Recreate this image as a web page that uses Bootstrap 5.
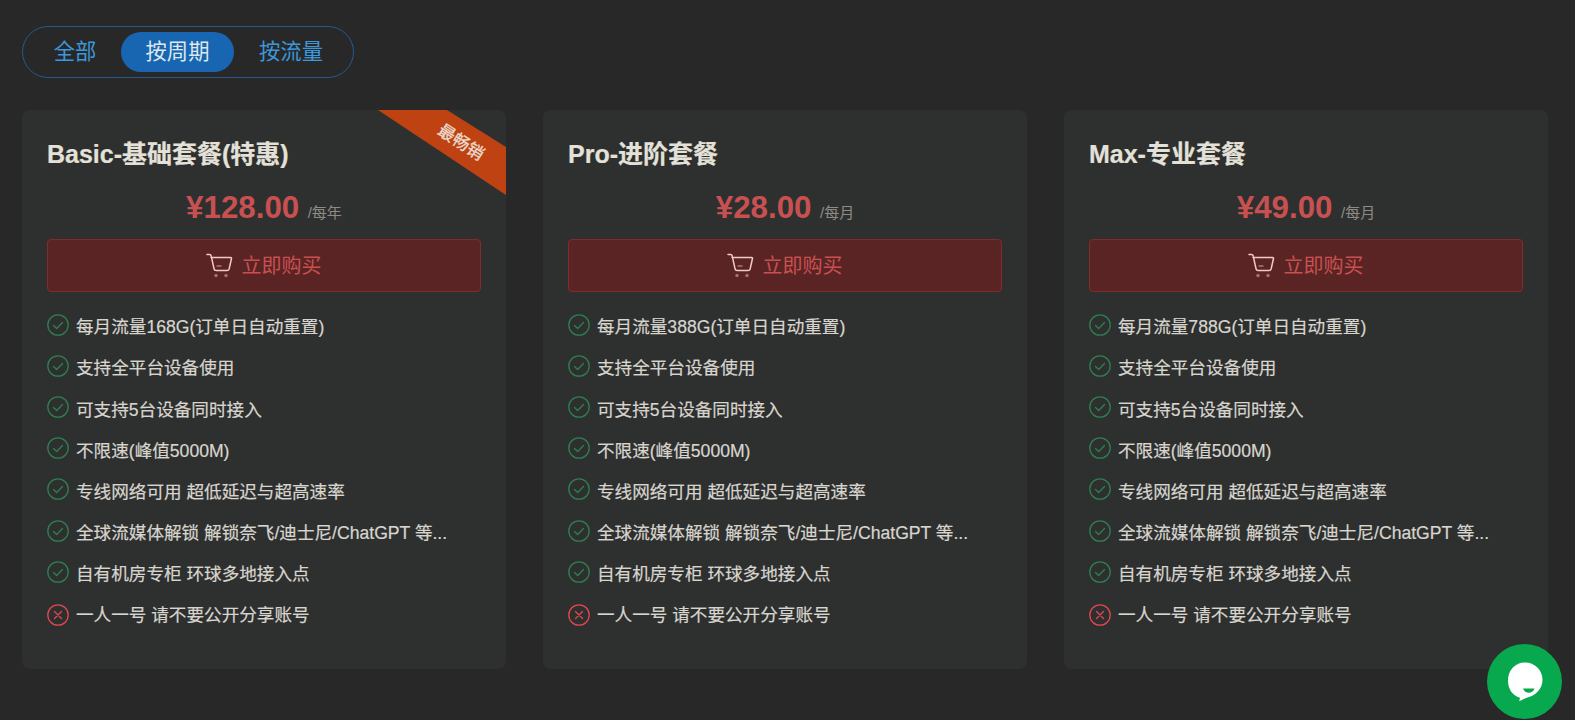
<!DOCTYPE html>
<html lang="zh-CN">
<head>
    <meta charset="UTF-8">
    <meta name="viewport" content="width=device-width, initial-scale=1, shrink-to-fit=no">
    <title>套餐</title>

    <link href="https://cdn.jsdelivr.net/npm/bootstrap@5.3.2/dist/css/bootstrap.min.css" rel="stylesheet">

    <style>
        body {
            font-family: "Liberation Sans", "Noto Sans CJK SC", sans-serif;
            background-color: #282828;
            color: #d8d5ce;
            height: 720px;
            overflow: hidden;
        }
        .page-wrap {
            padding: 26px 27px 0 22px;
        }
        .period-tabs {
            width: 332px;
            height: 52px;
            padding: 5px 0 0 0;
            border: 1px solid #245a8e;
            border-radius: 26px;
            margin-bottom: 32px;
        }
        .period-tab {
            height: 40px;
            line-height: 41px;
            font-size: 21.3px;
            color: #3c98dc;
            text-align: center;
            text-decoration: none;
            border-radius: 20px;
        }
        .period-tab.first { width: 98px; padding-left: 6px; }
        .period-tab.middle { width: 113px; background-color: #1866b2; color: #dfe6ec; }
        .period-tab.last { width: 114px; }
        .plan-row {
            --bs-gutter-x: 37px;
        }
        .plan-box {
            position: relative;
            height: 559px;
            padding: 26px 25px 0;
            background-color: #2e3030;
            border-radius: 8px;
            overflow: hidden;
        }
        .plan-title {
            font-size: 25px;
            line-height: 36px;
            font-weight: 700;
            color: #e4e1d9;
            margin: 0 0 17px;
            -webkit-text-stroke: 0.2px #e4e1d9;
        }
        .plan-price {
            height: 34px;
            line-height: 38px;
            margin-bottom: 16px;
        }
        .price-num {
            font-size: 31.3px;
            font-weight: 700;
            color: #c95050;
        }
        .price-unit {
            font-size: 15px;
            color: #8f8b82;
            margin-left: 4px;
        }
        .buy-btn {
            height: 53px;
            font-size: 20px;
            color: #c95050;
            background-color: #5a2424;
            border: 1px solid #842a2a;
            border-radius: 4px;
        }
        .buy-btn:hover {
            color: #c95050;
            background-color: #5a2424;
            border-color: #842a2a;
        }
        .feature-list {
            margin: 15px 0 0;
            padding: 0;
            list-style: none;
        }
        .feature-list li {
            height: 41.1px;
            font-size: 17.6px;
            white-space: nowrap;
            -webkit-text-stroke: 0.2px #d8d5ce;
        }
        .feature-icon {
            margin-right: 7px;
        }
        .check-mark {
            margin-top: -5px;
        }
        .ribbon-wrap {
            position: absolute;
            top: 0;
            right: 0;
            width: 128px;
            height: 85px;
            background-color: #bf4312;
            clip-path: polygon(0 0, 69px 0, 128px 37px, 128px 85px);
        }
        .ribbon-text {
            position: absolute;
            left: 57px;
            top: 23px;
            font-size: 17px;
            line-height: 20px;
            color: #ecdcd0;
            -webkit-text-stroke: 0.3px #ecdcd0;
            transform: rotate(33deg);
            white-space: nowrap;
        }
        .chat-btn {
            position: fixed;
            left: 1487px;
            top: 644px;
            width: 75px;
            height: 75px;
            background-color: #08a84f;
        }
    </style>
</head>
<body>

<div class="page-wrap">
    <div class="period-tabs d-flex justify-content-start">
        <a class="period-tab first" href="#">全部</a>
        <a class="period-tab middle" href="#">按周期</a>
        <a class="period-tab last" href="#">按流量</a>
    </div>

    <div class="row plan-row" id="plans"></div>
</div>

<div class="chat-btn rounded-circle">
    <svg width="75" height="75" viewBox="0 0 75 75">
        <path d="M38 18.500c9.800 0 17.500 7.500 17.500 17.300 0 9.800-7.700 16.200-16.500 18.200l-6.800 3.200 .8-3.500c-7.700-2.200-12-9-12-17.300 0-10.200 7.400-17.900 17-17.900z" fill="#fff"/>
        <path d="M36 44.500h11.500c-1 3-3.200 4.300-5.700 4.300s-4.800-1.300-5.800-4.300z" fill="#08a84f"/>
    </svg>
</div>

<script>
    const plans = [
        {title: 'Basic-基础套餐(特惠)', price: '¥128.00', unit: '/每年', traffic: '168G', hot: true},
        {title: 'Pro-进阶套餐', price: '¥28.00', unit: '/每月', traffic: '388G'},
        {title: 'Max-专业套餐', price: '¥49.00', unit: '/每月', traffic: '788G'}
    ];

    const checkIcon = `<svg class="feature-icon check-mark flex-shrink-0" width="22" height="22" viewBox="0 0 22 22" fill="none" stroke="#2f7f50" stroke-width="1.300">
        <circle cx="11" cy="11" r="10.200"/><path d="M6.500 11.500l3.200 3 5.800-6" stroke-linecap="round" stroke-linejoin="round"/></svg>`;
    const crossIcon = `<svg class="feature-icon flex-shrink-0" width="22" height="22" viewBox="0 0 22 22" fill="none" stroke="#e2474f" stroke-width="1.300">
        <circle cx="11" cy="11" r="10.200"/><path d="M7.500 7.500l7 7M14.500 7.500l-7 7" stroke-linecap="round"/></svg>`;
    const cartIcon = `<svg class="me-2" width="27" height="25" viewBox="0 0 27 25" fill="none" stroke="#f2c9c4" stroke-width="1.500">
        <path d="M1 1.500h2.700c.8 0 1.200.5 1.400 1.200l3 13.300c.2 1 1 1.500 2 1.500h11c1 0 1.700-.5 2-1.500l2.400-10.500c.1-.6-.2-1-.8-1H5" stroke-linecap="round" stroke-linejoin="round"/>
        <path d="M10.500 13h5" stroke="#a77a76"/>
        <circle cx="10" cy="22.500" r="1.700" fill="#a07472" stroke="none"/><circle cx="20" cy="22.500" r="1.700" fill="#a07472" stroke="none"/></svg>`;

    function featureRows(traffic) {
        const rows = [
            '每月流量' + traffic + '(订单日自动重置)',
            '支持全平台设备使用',
            '可支持5台设备同时接入',
            '不限速(峰值5000M)',
            '专线网络可用 超低延迟与超高速率',
            '全球流媒体解锁 解锁奈飞/迪士尼/ChatGPT 等...',
            '自有机房专柜 环球多地接入点'
        ];
        let html = rows.map(r => `<li class="d-flex align-items-center">${checkIcon}<span>${r}</span></li>`).join('');
        html += `<li class="d-flex align-items-center">${crossIcon}<span>一人一号 请不要公开分享账号</span></li>`;
        return html;
    }

    document.getElementById('plans').innerHTML = plans.map(p => `
        <div class="col-4">
            <div class="plan-box">
                ${p.hot ? '<div class="ribbon-wrap"><span class="ribbon-text">最畅销</span></div>' : ''}
                <h3 class="plan-title">${p.title}</h3>
                <div class="plan-price text-center">
                    <span class="price-num">${p.price}</span>
                    <span class="price-unit">${p.unit}</span>
                </div>
                <button class="btn buy-btn w-100 d-flex align-items-center justify-content-center p-0">${cartIcon}<span>立即购买</span></button>
                <ul class="feature-list">${featureRows(p.traffic)}</ul>
            </div>
        </div>`).join('');
</script>

</body>
</html>
